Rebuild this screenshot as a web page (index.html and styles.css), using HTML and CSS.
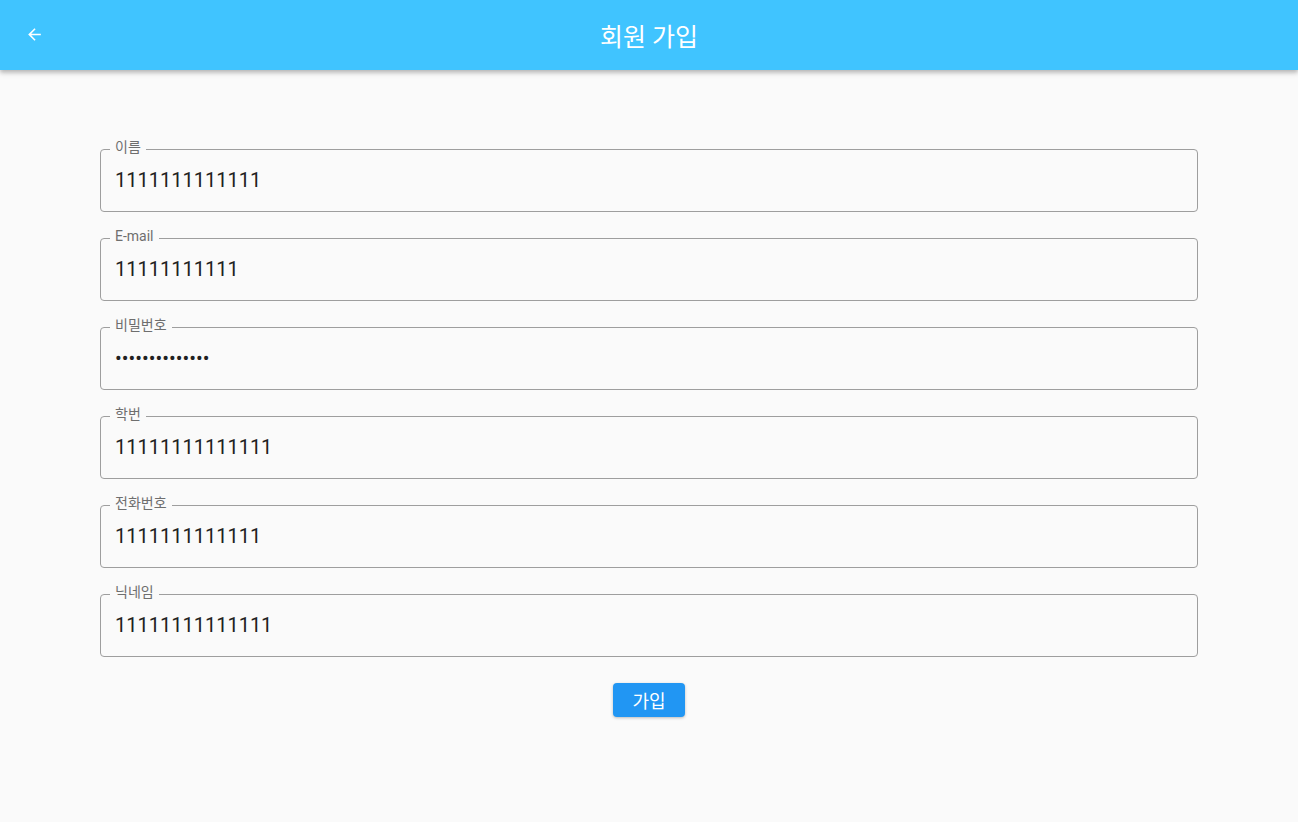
FILE: index.html
```html
<!DOCTYPE html>
<html lang="ko">
<head>
<meta charset="utf-8">
<link rel="stylesheet" href="styles.css">
</head>
<body>
<header class="appbar">
  <button class="back" aria-label="back">
    <svg viewBox="0 0 24 24" width="19" height="19"><path d="M20 11H7.83l5.59-5.59L12 4l-8 8 8 8 1.41-1.41L7.83 13H20v-2z" fill="#fff"/></svg>
  </button>
  <h1 class="title">회원 가입</h1>
</header>
<main class="form">
  <div class="field"><span class="label">이름</span><span class="value">1111111111111</span></div>
  <div class="field"><span class="label">E-mail</span><span class="value">11111111111</span></div>
  <div class="field"><span class="label">비밀번호</span><span class="value">••••••••••••••</span></div>
  <div class="field"><span class="label">학번</span><span class="value">11111111111111</span></div>
  <div class="field"><span class="label">전화번호</span><span class="value">1111111111111</span></div>
  <div class="field"><span class="label">닉네임</span><span class="value">11111111111111</span></div>
  <div class="actions"><button class="submit">가입</button></div>
</main>
</body>
</html>
```
FILE: styles.css
```css
* { box-sizing: border-box; }
html, body { margin: 0; padding: 0; }
body {
  background: #fafafa;
  font-family: Roboto, "Noto Sans CJK KR", sans-serif;
  width: 1298px;
  height: 822px;
  overflow: hidden;
}
.appbar {
  height: 70px;
  background: #40c4ff;
  display: flex;
  align-items: center;
  justify-content: center;
  position: relative;
  box-shadow: 0 2px 4px rgba(0,0,0,0.2), 0 4px 5px rgba(0,0,0,0.1);
}
.back {
  position: absolute;
  left: 25px;
  top: 25px;
  width: 19px;
  height: 19px;
  padding: 0;
  border: 0;
  background: none;
  display: flex;
}
.title {
  margin: 4px 0 0;
  color: #fff;
  font-size: 25px;
  font-weight: 400;
  line-height: 1;
  font-family: Roboto, "Noto Sans CJK KR", sans-serif;
}
.form {
  padding: 79px 100px 0;
  display: flex;
  flex-direction: column;
  gap: 26px;
}
.field {
  position: relative;
  height: 63px;
  border: 1px solid #9e9e9e;
  border-radius: 4px;
  display: flex;
  align-items: center;
  padding: 0 14px 2px;
}
.label {
  position: absolute;
  top: -13px;
  left: 9px;
  padding: 0 5px;
  background: #fafafa;
  color: #6e6e6e;
  font-size: 14px;
  line-height: 20px;
}
.value {
  color: #212121;
  font-size: 20px;
  line-height: 24px;
}
.actions {
  display: flex;
  justify-content: center;
  margin-top: 0;
}
.submit {
  width: 72px;
  height: 34px;
  border: 0;
  border-radius: 4px;
  background: #2196f3;
  color: #fff;
  font-family: Roboto, "Noto Sans CJK KR", sans-serif;
  font-size: 18px;
  padding: 0;
  box-shadow: 0 1px 3px rgba(0,0,0,0.25);
}
```
